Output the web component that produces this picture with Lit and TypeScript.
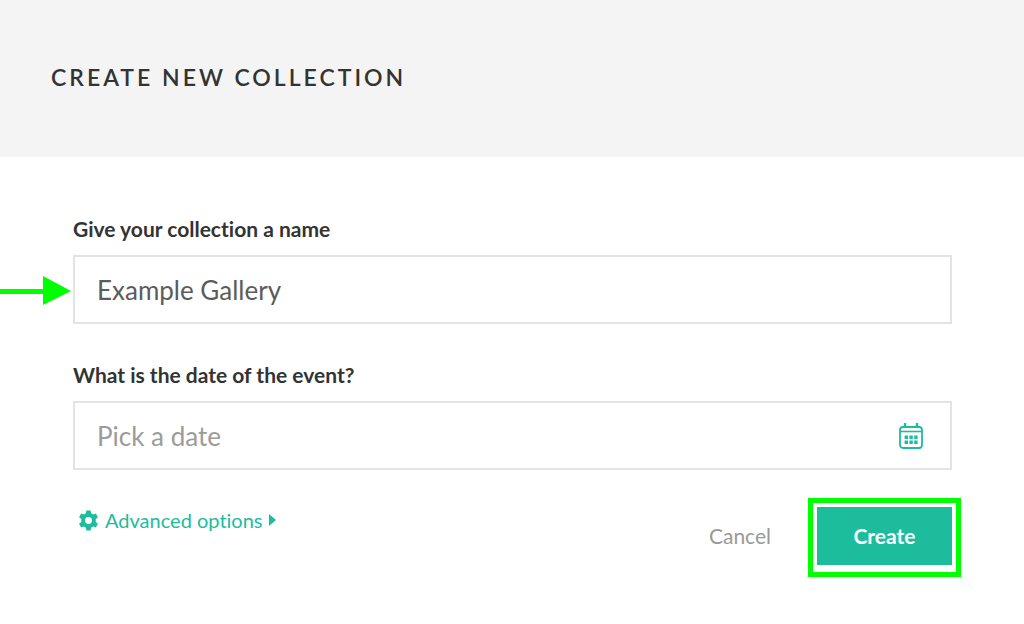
import { LitElement, html, css } from "lit";
import { customElement, state } from "lit/decorators.js";

@customElement("app-root")
export class AppRoot extends LitElement {
  @state() private name = "Example Gallery";
  @state() private date = "";

  static styles = css`
    :host {
      display: block;
      min-height: 100vh;
      background: #fff;
      color: #333;
      font-family: Lato, "Open Sans", sans-serif;
      font-variant-ligatures: none;
      --accent: #1dbc9c;
      --mark: #00ff00;
    }
    * {
      box-sizing: border-box;
    }
    .header {
      background: #f4f4f4;
      padding: 61px 51px 64px;
    }
    .title {
      margin: 0;
      font-size: 23px;
      line-height: 32px;
      font-weight: 600;
      letter-spacing: 3px;
      text-transform: uppercase;
    }
    .form {
      display: flex;
      flex-direction: column;
      gap: 37px;
      padding: 58px 72px 48px 73px;
    }
    .field {
      display: flex;
      flex-direction: column;
      gap: 12px;
    }
    .label {
      font-size: 21px;
      line-height: 28px;
      font-weight: 700;
    }
    .control {
      position: relative;
      display: flex;
      align-items: center;
      height: 69px;
      border: 2px solid #e3e3e3;
      padding-right: 26px;
    }
    .input {
      flex: 1;
      min-width: 0;
      height: 100%;
      border: 0;
      outline: 0;
      padding: 0 22px;
      background: transparent;
      font: inherit;
      font-size: 26px;
      color: #5c5c5c;
    }
    .input::placeholder {
      color: #9b9b9b;
      opacity: 1;
    }
    .calendar {
      width: 26px;
      height: 28px;
      color: var(--accent);
    }
    .arrow {
      position: absolute;
      right: 100%;
      top: 18px;
      width: 75px;
      height: 32px;
    }
    .actions {
      display: flex;
      justify-content: space-between;
      align-items: flex-start;
    }
    .advanced {
      display: flex;
      align-items: center;
      gap: 6px;
      padding-left: 5px;
      font-size: 20px;
      line-height: 26px;
      color: var(--accent);
      text-decoration: none;
    }
    .gear {
      width: 21px;
      height: 21px;
    }
    .caret {
      width: 7px;
      height: 12px;
    }
    .buttons {
      display: flex;
      align-items: center;
      gap: 46px;
    }
    .button {
      border: 0;
      padding: 0;
      background: none;
      font: inherit;
      font-size: 21px;
      line-height: 28px;
      cursor: pointer;
    }
    .cancel {
      color: #999;
    }
    .primary {
      position: relative;
    }
    .create {
      display: block;
      width: 135px;
      height: 58px;
      background: var(--accent);
      color: #fff;
      font-weight: 700;
    }
    .frame {
      position: absolute;
      inset: -9px -9px -12px;
      border: 5px solid var(--mark);
      pointer-events: none;
    }
  `;

  render() {
    return html`
      <header class="header"><h1 class="title">Create new collection</h1></header>
      <form class="form" @submit=${(e: Event) => e.preventDefault()}>
        <div class="field">
          <label class="label" for="name">Give your collection a name</label>
          <div class="control">
            <input
              class="input"
              id="name"
              type="text"
              .value=${this.name}
              @input=${(e: Event) => (this.name = (e.target as HTMLInputElement).value)}
            />
            <svg class="arrow" viewBox="0 0 75 32" fill="#00ff00" aria-hidden="true">
              <path d="M0 14h43V1l28 15-28 14V19H0z" />
            </svg>
          </div>
        </div>
        <div class="field">
          <label class="label" for="date">What is the date of the event?</label>
          <div class="control">
            <input
              class="input"
              id="date"
              type="text"
              placeholder="Pick a date"
              .value=${this.date}
              @input=${(e: Event) => (this.date = (e.target as HTMLInputElement).value)}
            />
            <svg class="calendar" viewBox="0 0 26 28" fill="none" stroke="currentColor" aria-hidden="true">
              <rect x="2" y="5" width="22" height="21" rx="3" stroke-width="1.8" />
              <path d="M2 9.5h22" stroke-width="1.6" />
              <path d="M7 1v4M19 1v4" stroke-width="2.4" />
              <path d="M6.600 15.200h13M6.600 20.200h13" stroke-width="3.400" stroke-dasharray="3.400 1.400" />
            </svg>
          </div>
        </div>
        <div class="actions">
          <a class="advanced" href="#advanced">
            <svg class="gear" viewBox="0 0 20 20" fill="currentColor" aria-hidden="true">
              <path
                fill-rule="evenodd"
                d="M8 .5h4l.5 2.7 1.9 1.1 2.6-.9 2 3.4-2.1 1.8v2.8l2.1 1.8-2 3.4-2.6-.9-1.9 1.1-.5 2.7H8l-.5-2.7-1.9-1.1-2.6.9-2-3.4 2.1-1.8V8.600L1 6.800l2-3.400 2.600.9 1.900-1.100zM10 6.700a3.300 3.300 0 1 0 0 6.600 3.300 3.300 0 0 0 0-6.600z"
              />
            </svg>
            <span>Advanced options</span>
            <svg class="caret" viewBox="0 0 7 12" fill="currentColor" aria-hidden="true">
              <path d="M0 0l7 6-7 6z" />
            </svg>
          </a>
          <div class="buttons">
            <button class="button cancel" type="button">Cancel</button>
            <div class="primary">
              <button class="button create" type="submit">Create</button>
              <span class="frame"></span>
            </div>
          </div>
        </div>
      </form>
    `;
  }
}
